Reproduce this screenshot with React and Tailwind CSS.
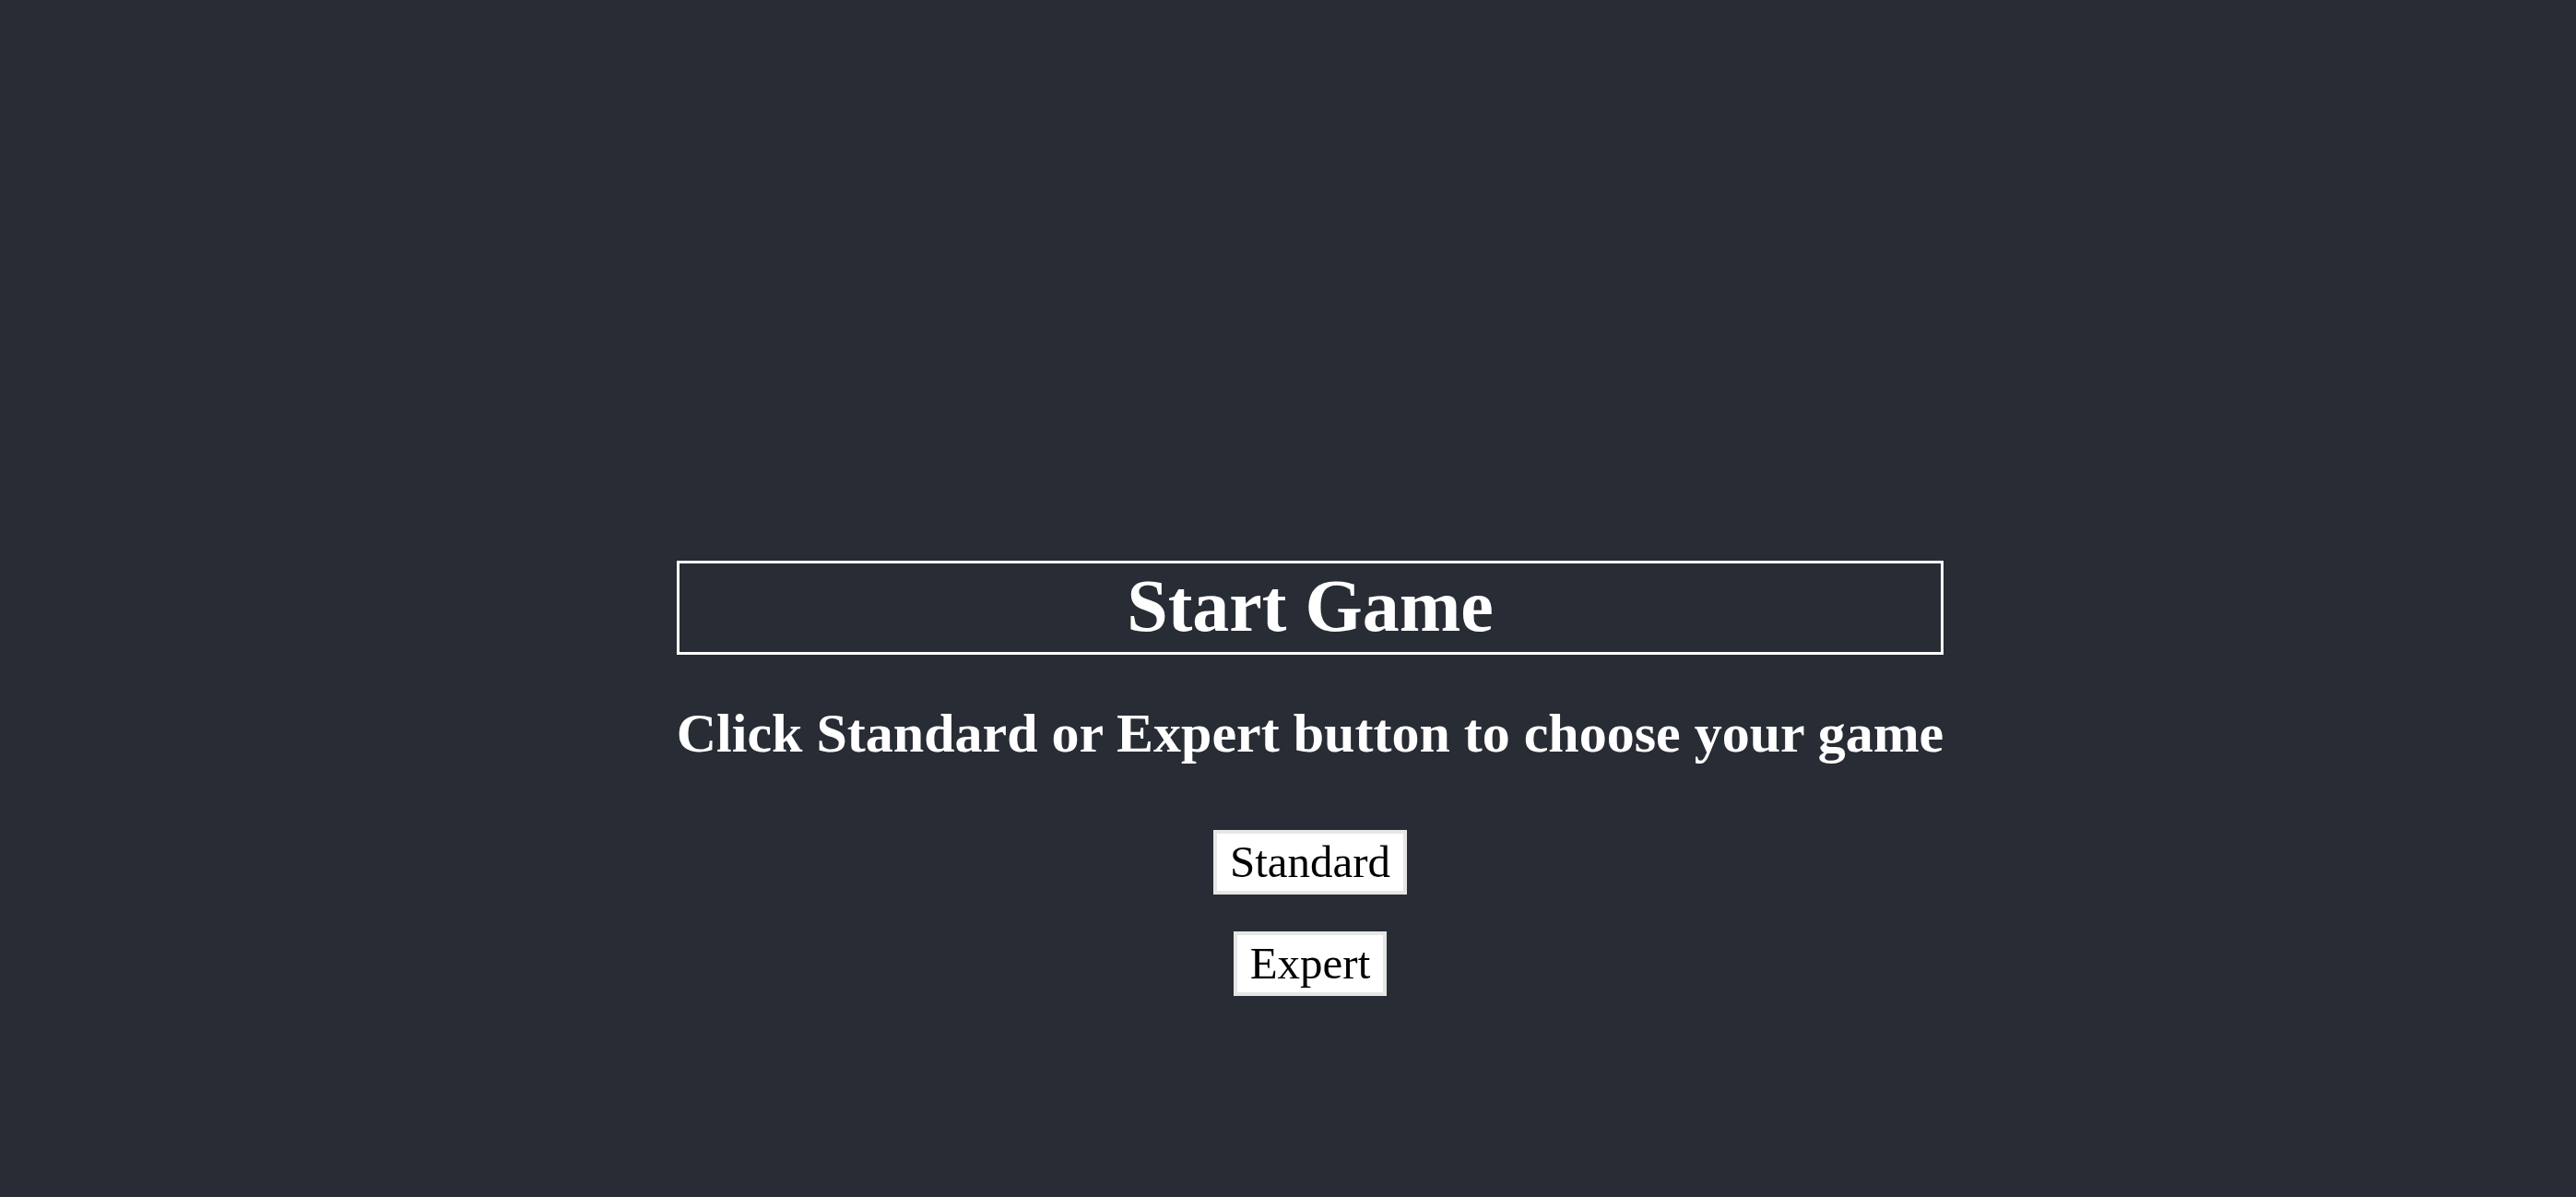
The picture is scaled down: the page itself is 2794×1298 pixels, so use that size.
export default function App() {
  return (
    <div className="min-h-screen w-full bg-[#282c34] text-white font-['Liberation_Serif',serif] flex flex-col items-center pt-[608px] pl-[48px]">
      <div className="w-fit flex flex-col items-stretch">
        <h1 className="border-[3px] border-white text-center text-[80px] font-bold leading-[86px] pt-[3px] pb-[7px]">
          Start Game
        </h1>
        <h2 className="mt-[51px] text-center text-[60px] font-bold leading-[69px] whitespace-nowrap">
          Click Standard or Expert button to choose your game
        </h2>
      </div>
      <button className="mt-[70px] bg-white text-black border-[4px] border-[#e6e6e6] px-[14px] py-[3px] text-[49px] leading-[56px]">
        Standard
      </button>
      <button className="mt-[40px] bg-white text-black border-[4px] border-[#e6e6e6] px-[14px] py-[3px] text-[49px] leading-[56px]">
        Expert
      </button>
    </div>
  )
}
